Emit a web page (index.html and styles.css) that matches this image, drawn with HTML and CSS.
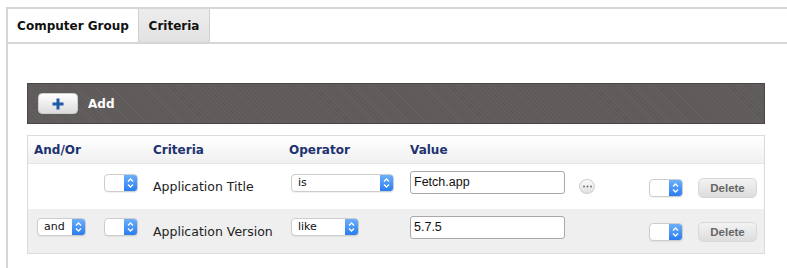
FILE: index.html
```html
<!DOCTYPE html>
<html lang="en">

<head>
  <meta charset="UTF-8">
  <title>Computer Group - Criteria</title>
  <link rel="stylesheet" href="styles.css">
</head>

<body>
  <div class="panel">
    <div class="tabs">
      <div class="tab tab-first">Computer Group</div>
      <div class="tab tab-active">Criteria</div>
    </div>

    <div class="panel-body">
      <div class="toolbar">
        <button class="add-button">
          <svg width="14" height="14" viewBox="0 0 14 14">
            <path d="M7 1.5v11M1.5 7h11" stroke="#1f5aa6" stroke-width="3" fill="none" />
          </svg>
        </button>
        <span class="add-label">Add</span>
      </div>

      <div class="criteria-table">
        <div class="row row-head">
          <div class="cell">And/Or</div>
          <div class="cell"></div>
          <div class="cell">Criteria</div>
          <div class="cell">Operator</div>
          <div class="cell">Value</div>
          <div class="cell"></div>
          <div class="cell"></div>
          <div class="cell"></div>
        </div>

        <div class="row">
          <div class="cell"></div>
          <div class="cell"><div class="select select-small"><span class="select-text"></span><span class="select-arrow"></span></div></div>
          <div class="cell cell-text">Application Title</div>
          <div class="cell"><div class="select select-op-wide"><span class="select-text">is</span><span class="select-arrow"></span></div></div>
          <div class="cell"><div class="text-input">Fetch.app</div></div>
          <div class="cell">
            <span class="more-button">
              <svg width="9" height="3" viewBox="0 0 9 3">
                <circle cx="1" cy="1.5" r="0.9" fill="#666" />
                <circle cx="4.5" cy="1.5" r="0.9" fill="#666" />
                <circle cx="8" cy="1.5" r="0.9" fill="#666" />
              </svg>
            </span>
          </div>
          <div class="cell"><div class="select select-small select-right"><span class="select-text"></span><span class="select-arrow"></span></div></div>
          <div class="cell"><button class="delete-button">Delete</button></div>
        </div>

        <div class="row row-alt">
          <div class="cell"><div class="select select-andor"><span class="select-text">and</span><span class="select-arrow"></span></div></div>
          <div class="cell"><div class="select select-small"><span class="select-text"></span><span class="select-arrow"></span></div></div>
          <div class="cell cell-text">Application Version</div>
          <div class="cell"><div class="select select-op"><span class="select-text">like</span><span class="select-arrow"></span></div></div>
          <div class="cell"><div class="text-input">5.7.5</div></div>
          <div class="cell"></div>
          <div class="cell"><div class="select select-small select-right"><span class="select-text"></span><span class="select-arrow"></span></div></div>
          <div class="cell"><button class="delete-button">Delete</button></div>
        </div>
      </div>
    </div>
  </div>
</body>

</html>
```

FILE: styles.css
```css
* {
  margin: 0;
  padding: 0;
  box-sizing: border-box;
}

body {
  font-family: 'DejaVu Sans', sans-serif;
  background-color: #fff;
  color: #222;
  overflow: hidden;
}

.panel {
  margin: 7px 0 0 6px;
  border-top: 2px solid #d6d6d6;
  border-left: 2px solid #d6d6d6;
  height: 270px;
}

.tabs {
  display: flex;
  height: 35px;
  border-bottom: 2px solid #d6d6d6;
}

.tab {
  display: flex;
  align-items: center;
  justify-content: center;
  font-size: 12px;
  font-weight: 700;
  color: #111;
  border-right: 1px solid #d0d0d0;
}

.tab-first {
  width: 131px;
  background-color: #fff;
}

.tab-active {
  width: 71px;
  background: linear-gradient(to bottom, #ededed, #e2e2e2);
}

.panel-body {
  padding: 39px 0 0 19px;
}

.toolbar {
  width: 738px;
  height: 41px;
  display: flex;
  align-items: center;
  gap: 10px;
  padding-left: 10px;
  background-color: #5f5a5a;
  background-image: repeating-linear-gradient(45deg, rgba(255, 255, 255, 0.04) 0 1px, transparent 1px 3px);
  border: 1px solid #4a4646;
}

.add-button {
  width: 40px;
  height: 21px;
  display: flex;
  align-items: center;
  justify-content: center;
  border: 1px solid #cfcfcf;
  border-radius: 4px;
  background: linear-gradient(to bottom, #ffffff, #dcdcdc);
}

.add-label {
  color: #fff;
  font-size: 12px;
  font-weight: 700;
}

.criteria-table {
  width: 738px;
  margin-top: 11px;
  border: 1px solid #dcdcdc;
}

.row {
  display: grid;
  grid-template-columns: 70px 49px 136px 121px 166px 73px 49px 72px;
  height: 45px;
  align-items: center;
  background-color: #fff;
}

.row-head {
  height: 28px;
  background: linear-gradient(to bottom, #ffffff, #f0f0f0);
  border-bottom: 1px solid #e6e6e6;
  color: #1c3270;
  font-size: 12px;
  font-weight: 700;
}

.row-alt {
  height: 44px;
  background-color: #efefef;
}

.cell {
  padding-left: 6px;
  display: flex;
  align-items: center;
}

.cell-text {
  font-size: 12.5px;
  color: #222;
}

.select {
  display: flex;
  height: 18px;
  margin-bottom: 8px;
  border: 1px solid #cdcdcd;
  border-radius: 4px;
  background-color: #fff;
  overflow: hidden;
  font-size: 11px;
  color: #111;
  box-shadow: 0 1px 1px rgba(0, 0, 0, 0.06);
}

.select-text {
  flex: 1;
  padding-left: 6px;
  line-height: 15px;
}

.select-arrow {
  width: 13px;
  background-image:
    url("data:image/svg+xml;utf8,<svg xmlns='http://www.w3.org/2000/svg' width='13' height='16'><path d='M4 6.5l2.5-2.5 2.5 2.5M4 9.5l2.5 2.5 2.5-2.5' stroke='white' stroke-width='1.3' fill='none'/></svg>"),
    linear-gradient(to bottom, #6cb0fb, #2a7cf0);
  background-repeat: no-repeat;
  background-position: center;
}

.select-small {
  width: 34px;
}

.select-right {
  margin-bottom: 0;
  margin-top: 2px;
}

.select-andor {
  width: 49px;
  margin-left: 3px;
}

.select-op-wide {
  width: 103px;
  margin-left: 2px;
}

.select-op {
  width: 68px;
  margin-left: 2px;
}

.text-input {
  width: 155px;
  height: 23px;
  margin-bottom: 8px;
  padding-left: 3px;
  border: 1px solid #a9a9a9;
  border-radius: 3px;
  background-color: #fff;
  font-family: 'Liberation Sans', sans-serif;
  font-size: 12.5px;
  line-height: 21px;
  color: #111;
}

.more-button {
  width: 16px;
  height: 15px;
  margin-left: 3px;
  display: flex;
  align-items: center;
  justify-content: center;
  border-radius: 50%;
  border: 1px solid #d0d0d0;
  background: linear-gradient(to bottom, #fbfbfb, #e2e2e2);
}

.delete-button {
  width: 59px;
  height: 20px;
  margin-top: 2px;
  border: 1px solid #d8d8d8;
  border-radius: 5px;
  background: linear-gradient(to bottom, #f3f3f3, #dddddd);
  font-family: 'Liberation Sans', sans-serif;
  font-size: 11.5px;
  font-weight: 700;
  color: #666;
}
```
